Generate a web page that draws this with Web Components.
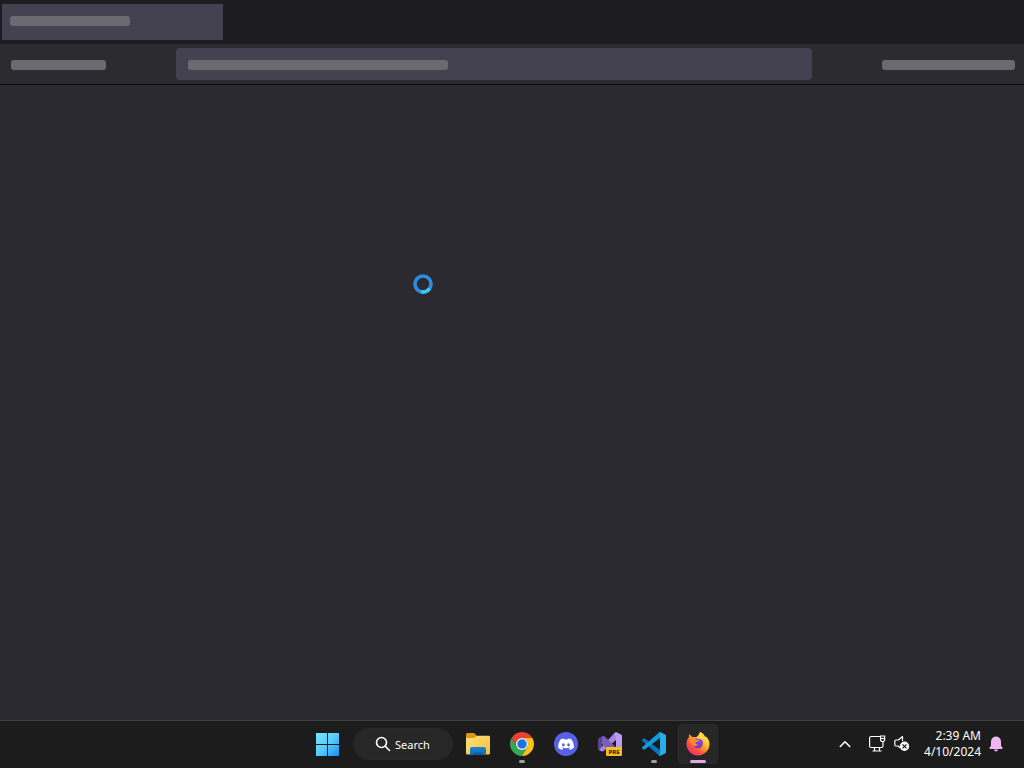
<!DOCTYPE html>
<html lang="en">
<head>
<meta charset="utf-8">
<meta name="viewport" content="width=device-width, initial-scale=1">
<title>Desktop</title>
<style>
html, body { height: 100%; margin: 0; }
body { background: #2b2a31; color: #fff; font-family: "Noto Sans", "Open Sans", sans-serif; font-size: 12px; }
</style>
</head>
<body>
<desktop-screen></desktop-screen>

<template id="t-screen">
<style>
:host { display: flex; flex-direction: column; min-height: 100vh; }
browser-skeleton { flex: 1; }
</style>
<browser-skeleton></browser-skeleton>
<task-bar></task-bar>
</template>

<template id="t-bar">
<style>
:host { display: block; height: 10px; border-radius: 3px; background: #6b6a70; }
</style>
</template>

<template id="t-browser">
<style>
:host { display: flex; flex-direction: column; background: #2b2a31; }
.tabs { display: flex; height: 36px; padding: 4px 2px; background: #1d1c20; }
.tab { display: flex; width: 221px; box-sizing: border-box; padding: 12px 8px; background: #444250; }
.tools { display: grid; grid-template-columns: 165px 1fr 203px; height: 32px; padding: 4px 9px 4px 11px; border-bottom: 1px solid #0c0c0d; background: #2c2b30; }
.tools > skeleton-bar { margin-top: 12px; }
.url { padding: 12px 12px 10px; border-radius: 4px; background: #444250; }
.end { justify-self: end; }
.short { width: 95px; }
.title { width: 120px; }
.address { width: 260px; }
.long { width: 133px; }
main { flex: 1; position: relative; }
busy-cursor { position: absolute; left: 413px; top: 189px; }
</style>
<div class="tabs"><div class="tab"><skeleton-bar class="title"></skeleton-bar></div></div>
<div class="tools">
<skeleton-bar class="short"></skeleton-bar>
<div class="url"><skeleton-bar class="address"></skeleton-bar></div>
<skeleton-bar class="long end"></skeleton-bar>
</div>
<main><busy-cursor></busy-cursor></main>
</template>

<template id="t-cursor">
<style>:host, svg { display: block; width: 20px; height: 20px; }</style>
<svg viewBox="0 0 20 20" fill="none"><circle cx="10" cy="10" r="8" stroke="#2f8ce3" stroke-width="3.6"/><path d="M16.5 14.5A8 8 0 0 1 8 17.7" stroke="#3bc6f5" stroke-width="3.6"/></svg>
</template>

<template id="t-app">
<style>
:host { display: block; width: 44px; }
button { position: relative; display: grid; place-items: center; width: 40px; height: 40px; margin: 0 2px; padding: 0; border: 1px solid transparent; border-radius: 4px; background: none; }
:host([active]) button { background: #272728; border-color: #2c2c2d; }
:host([running]) button::after { content: ""; position: absolute; left: 50%; bottom: 0; width: 6px; height: 3px; border-radius: 2px; background: #a0a0a0; transform: translateX(-50%); }
:host([active]) button::after { width: 16px; background: #dfa9e2; }
</style>
<button type="button"><slot></slot></button>
</template>

<template id="t-taskbar">
<style>
:host { display: grid; grid-template-columns: 1fr auto 1fr; align-items: center; height: 45px; padding-bottom: 2px; border-top: 1px solid #403f43; background: #1c1c1c; }
nav { grid-column: 2; display: flex; align-items: center; }
svg { display: block; }
.search { display: flex; align-items: center; justify-content: center; gap: 4px; width: 100px; height: 32px; margin: 0 3px 0 4px; padding: 1px 0 0; border: 1px solid #292929; border-radius: 16px; background: #272727; color: #fff; font: inherit; font-size: 11px; }
system-tray { justify-self: end; }
</style>
<nav aria-label="Taskbar">
<app-button label="Start"><svg width="24" height="24" viewBox="0 0 24 24"><defs><linearGradient id="win" x1="0" y1="0" x2="24" y2="24" gradientUnits="userSpaceOnUse"><stop stop-color="#78edff"/><stop offset=".55" stop-color="#55c8fb"/><stop offset="1" stop-color="#168ff0"/></linearGradient></defs><path fill="url(#win)" d="M1 1h11v11H1zM13 1h11v11H13zM1 13h11v11H1zM13 13h11v11H13z"/></svg></app-button>
<button class="search" type="button"><svg width="16" height="16" viewBox="0 0 16 16" fill="none" stroke="#fff" stroke-width="1.6" stroke-linecap="round"><circle cx="6.5" cy="6.5" r="5"/><path d="M10.3 10.3l4.2 4.2"/></svg><span>Search</span></button>
<app-button label="File Explorer"><svg width="24" height="24" viewBox="0 0 24 24"><defs><linearGradient id="fold" x1="0" y1="0" x2="1" y2="1"><stop stop-color="#ffe07a"/><stop offset="1" stop-color="#f7c13b"/></linearGradient><linearGradient id="tray" x1="0" y1="0" x2="0" y2="1"><stop stop-color="#1688d6"/><stop offset="1" stop-color="#1769ad"/></linearGradient></defs><path fill="#d99a14" d="M0 7V2.500Q0 1 1.500 1H8l3 3-3 3z"/><path fill="url(#fold)" d="M0 6h8l2.800-2.200H23q1 0 1 1V21q0 1.500-1.500 1.500h-21Q0 22.500 0 21z"/><path fill="url(#tray)" d="M4 23v-6q0-2 2-2h12q2 0 2 2v6z"/><path fill="#125d9e" d="M7.500 20.500h9V23h-9z"/></svg></app-button>
<app-button label="Chrome" running><svg width="24" height="24" viewBox="0 0 48 48"><path fill="#e94335" d="M3.220 12A24 24 0 0 1 44.780 12H24A12 12 0 0 0 13.610 30z"/><path fill="#34a853" d="M3.220 12A24 24 0 0 0 24 48L34.390 30A12 12 0 0 1 13.610 30z"/><path fill="#fbc116" d="M44.780 12A24 24 0 0 1 24 48L34.390 30A12 12 0 0 0 24 12z"/><circle cx="24" cy="24" r="12" fill="#fff"/><circle cx="24" cy="24" r="9.5" fill="#1a73e8"/></svg></app-button>
<app-button label="Discord"><svg width="24" height="24" viewBox="0 0 24 24"><circle cx="12" cy="12" r="12" fill="#5661e9"/><path fill="#fff" d="M17.500 7.400A13 13 0 0 0 14.400 6.500L13.900 7.500a12 12 0 0 0-3.800 0L9.600 6.500a13 13 0 0 0-3.100.9C4.600 10.200 4 13.200 4.200 16.100a13 13 0 0 0 3.900 1.900l1-1.500-1.300-.7.4-.3c2.400 1.100 5.200 1.100 7.600 0l.4.3-1.300.7 1 1.500a13 13 0 0 0 3.900-1.900c.3-3.400-.5-6.200-2.300-8.700z"/><ellipse cx="9.400" cy="12.800" rx="1.400" ry="1.600" fill="#5661e9"/><ellipse cx="14.600" cy="12.800" rx="1.400" ry="1.600" fill="#5661e9"/></svg></app-button>
<app-button label="Visual Studio Preview"><svg width="24" height="24" viewBox="0 0 24 24"><path fill="#58458f" d="M0 7.500Q0 6.500 1 6l3-1.500V19.500L1 18Q0 17.500 0 16.500z"/><path fill="#a584e2" d="M1 18l3 1.500q1 .2 2-.8L18 8V.4q-.8 0-1.500.6L4 14.500z"/><path fill="#7a5fba" d="M4 4.500Q5.500 3.500 7 4.800L18 15.500V24L4 12z"/><path fill="#bb9bf2" d="M16.500 1Q17.500 0 18.500.3L23 2.500q1 .5 1 1.500v16q0 1-1 1.500L18 24V7.500z"/><rect x="8" y="15" width="16" height="9" rx="1" fill="#f9bd22"/><text x="16" y="22" text-anchor="middle" font-family="Noto Sans, sans-serif" font-size="6" font-weight="800" fill="#35290b">PRE</text></svg></app-button>
<app-button label="Visual Studio Code" running><svg width="24" height="24" viewBox="0 0 24 24"><path fill="#0878bd" d="M0 7.800L1.600 6.400q.5-.4 1 0L18 18v5.500q-.7.3-1.500-.4L.1 8.700Q-.3 8.200 0 7.800z"/><path fill="#149bde" d="M0 16.200l1.600 1.400q.5.4 1 0L18 6V.5Q17.200.2 16.500.9L.1 15.300q-.4.5-.1.9z"/><path fill="#2bacea" d="M17 .3Q17.500-.1 18 .1l5.100 2.500q.9.5.9 1.400v16q0 .9-.9 1.400L18 23.900q-.6.2-1.200-.3.7.1 1.200-1V1.400Q17.700.4 17 .3z"/></svg></app-button>
<app-button label="Firefox" running active><svg width="24" height="24" viewBox="0 0 24 24"><defs><linearGradient id="fox" x1="20" y1="3" x2="4" y2="22" gradientUnits="userSpaceOnUse"><stop stop-color="#ffec45"/><stop offset=".4" stop-color="#ffa42a"/><stop offset=".7" stop-color="#ff5140"/><stop offset="1" stop-color="#f02f70"/></linearGradient><linearGradient id="globe" x1="0" y1="0" x2="0" y2="1"><stop stop-color="#a549ed"/><stop offset="1" stop-color="#6140bf"/></linearGradient></defs><path fill="url(#fox)" d="M14.200 0c3 1.600 4.400 3.500 5 5.600l.6-1.400c2.300 2.200 4 5 3.800 8.600A11.600 11.600 0 0 1 .5 13.200C.2 10 1.200 7.200 2.900 5.300L3.200 2l3 3.100q1.500-.4 2.700 0L11 6z"/><ellipse cx="12" cy="11" rx="5" ry="5.300" fill="url(#globe)"/><path fill="#ff8b2b" d="M4.500 6.300c2-.8 4.500-.2 5.600 1.300 1.600.1 2.800.5 3 1.100-.8 1.100-3.100.9-3.700 2-.4 1 1 1.900 2.900 2-1.500 1.600-4 1.700-6 .5C4 11.500 3 8.300 4.500 6.300z"/><path fill="#ffd83c" d="M14.200 0c3 1.600 4.400 3.500 5 5.600 2 2.500 2.500 6 1.100 9.200-.2-3.700-1.800-5.700-4.200-7.300C12.500 7 10 6 9.200 5.200 11.500 5.500 13 3 14.200 0z"/></svg></app-button>
</nav>
<system-tray></system-tray>
</template>

<template id="t-tray">
<style>
:host { display: flex; align-items: center; padding-right: 17px; }
button { display: grid; place-items: center; padding: 0; border: 0; background: none; color: inherit; font: inherit; }
svg { display: block; }
.more { width: 24px; height: 40px; }
.status { grid-auto-flow: column; gap: 8px; height: 40px; margin: 0 14px 0 12px; }
.clock { line-height: 16px; justify-items: end; margin-right: 4px; }
.bell { width: 22px; height: 40px; }
</style>
<button class="more" type="button" aria-label="Show hidden icons"><svg width="12" height="8" viewBox="0 0 12 8" fill="none" stroke="#fff" stroke-width="1.6" stroke-linecap="round" stroke-linejoin="round"><path d="M1.300 6.500L6 1.800l4.700 4.700"/></svg></button>
<button class="status" type="button" aria-label="Network and volume">
<svg width="17" height="17" viewBox="0 0 17 17" fill="none" stroke="#fff" stroke-width="1.2"><path d="M11 1.500H2Q.6 1.500.6 3v8q0 1.500 1.400 1.500h10.500q1.500 0 1.500-1.500V7M5.500 12.500v3.500M10.500 12.500v3.500M3.500 16h9"/><path d="M11.600 1h4v4.500l-1 1h-2l-1-1zM11.600 3.500h4"/></svg>
<svg width="16" height="17" viewBox="0 0 16 17" fill="none"><path d="M8.500 6V1.500L4.300 5H2Q.8 5 .8 6.200v3.600Q.8 11 2 11h2l2 1.800" stroke="#fff" stroke-width="1.2" stroke-linejoin="round"/><circle cx="10.500" cy="11.300" r="4.700" fill="#fff"/><path d="M8.500 9.300l4 4m0-4l-4 4" stroke="#1c1c1c" stroke-width="1.2"/></svg>
</button>
<button class="clock" type="button"><span>2:39 AM</span><span>4/10/2024</span></button>
<button class="bell" type="button" aria-label="Notifications"><svg width="14" height="16" viewBox="0 0 14 16" fill="#efb6f2"><path d="M7 .5a5 5 0 0 1 5 5v4l1.600 2.500q.3.900-.6.900H1q-.9 0-.6-.9L2 9.500v-4a5 5 0 0 1 5-5zM4.800 13.600h4.400Q8.600 15.500 7 15.500t-2.200-1.900z"/></svg></button>
</template>

<script>
function define(name, templateId, setup) {
  customElements.define(name, class extends HTMLElement {
    constructor() {
      super();
      this.attachShadow({ mode: "open" }).append(document.getElementById(templateId).content.cloneNode(true));
    }
    connectedCallback() { if (setup) setup(this); }
  });
}
define("skeleton-bar", "t-bar");
define("busy-cursor", "t-cursor");
define("browser-skeleton", "t-browser");
define("app-button", "t-app", el => el.shadowRoot.querySelector("button").setAttribute("aria-label", el.getAttribute("label")));
define("system-tray", "t-tray");
define("task-bar", "t-taskbar");
define("desktop-screen", "t-screen");
</script>
</body>
</html>
